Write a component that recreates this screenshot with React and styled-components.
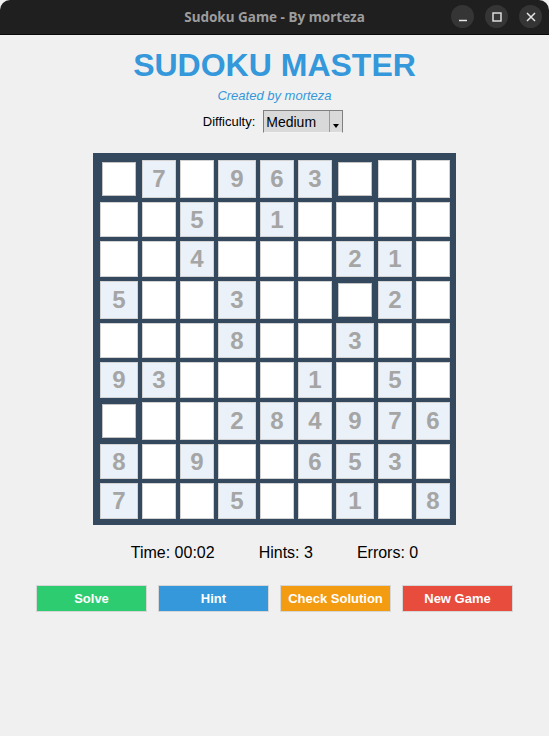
import React from "react";
import styled, { createGlobalStyle } from "styled-components";

const GlobalStyle = createGlobalStyle`
  html, body {
    margin: 0;
    padding: 0;
    background: #f0f0f0;
  }
  #root {
    min-height: 736px;
  }
`;

const Window = styled.div`
  width: 549px;
  min-height: 736px;
  background: #f0f0f0;
  font-family: "Liberation Sans", Arial, sans-serif;
`;

const TitleBar = styled.div`
  position: relative;
  height: 34px;
  background: #1f1f1f;
  border-bottom: 1px solid #0a0a0a;
  border-radius: 10px 10px 0 0;
  display: flex;
  align-items: center;
  justify-content: center;
`;

const WindowTitle = styled.div`
  font-family: "Noto Sans", "DejaVu Sans", sans-serif;
  font-weight: 700;
  font-size: 13.5px;
  color: #9c9c9c;
`;

const Controls = styled.div`
  position: absolute;
  right: 7px;
  top: 5px;
  display: flex;
  gap: 11px;
`;

const CtrlButton = styled.div`
  width: 23px;
  height: 23px;
  border-radius: 50%;
  background: #353535;
  display: flex;
  align-items: center;
  justify-content: center;
`;

const Main = styled.div`
  display: flex;
  flex-direction: column;
  align-items: center;
`;

const Title = styled.h1`
  margin: 12px 0 0;
  font-size: 32px;
  line-height: 37px;
  font-weight: 700;
  color: #3498db;
`;

const Subtitle = styled.div`
  margin-top: 4px;
  font-size: 13px;
  line-height: 16px;
  font-style: italic;
  color: #3498db;
`;

const DifficultyRow = styled.div`
  margin-top: 6px;
  display: flex;
  align-items: center;
  gap: 8px;
  font-size: 13px;
  color: #000;
  margin-left: -3px;
`;

const Select = styled.div`
  position: relative;
  width: 80px;
  height: 23px;
  box-sizing: border-box;
  background: #d9d9d9;
  border-top: 1px solid #808080;
  border-left: 1px solid #808080;
  border-right: 1px solid #808080;
  border-bottom: 1px solid #f4f4f4;
  display: flex;
  align-items: center;
  padding-left: 2px;
  font-size: 14px;
  color: #000;
`;

const Arrow = styled.div`
  position: absolute;
  right: 0;
  top: 0;
  bottom: 0;
  width: 12px;
  border-left: 1px solid #9a9a9a;
  background: #dadada;
  &::after {
    content: "";
    position: absolute;
    left: 3px;
    bottom: 4px;
    border-left: 3.5px solid transparent;
    border-right: 3.5px solid transparent;
    border-top: 4px solid #000;
  }
`;

const Board = styled.div`
  margin-top: 20px;
  background: #34495e;
  padding: 7px 6px 6px 7px;
  display: grid;
  grid-template-columns: 38px 34px 34px 38px 34px 34px 38px 34px 34px;
  grid-template-rows: 38px 35px 36px 38px 35px 36px 38px 35px 36px;
  gap: 4px;
`;

const Cell = styled.div`
  box-sizing: border-box;
  margin: ${(p) => (p.$small ? "2px" : "0")};
  background: ${(p) => (p.$given ? "#eaf1f8" : "#ffffff")};
  border: 1px solid ${(p) => (p.$small ? "#c4c4c4" : "#d2d2d2")};
  display: flex;
  align-items: center;
  justify-content: center;
  font-size: 24px;
  font-weight: 700;
  color: #a5a5a5;
`;

const Stats = styled.div`
  margin-top: 18px;
  display: flex;
  gap: 44px;
  font-size: 16px;
  line-height: 19px;
  color: #000;
`;

const ButtonRow = styled.div`
  margin-top: 23px;
  display: flex;
  gap: 11px;
`;

const ActionButton = styled.button`
  width: 111px;
  height: 27px;
  box-sizing: border-box;
  border: 1px solid #d6d6d6;
  background: ${(p) => p.$color};
  color: #ffffff;
  font-family: "Liberation Sans", Arial, sans-serif;
  font-size: 13px;
  font-weight: 700;
  padding: 0;
  cursor: pointer;
`;

const puzzle = [
  "070963000",
  "005010000",
  "004000210",
  "500300020",
  "000800300",
  "930001050",
  "000284976",
  "809006530",
  "700500108",
];

const smallCells = ["0-0", "0-6", "3-6", "6-0"];

const App = () => {
  return (
    <Window>
      <GlobalStyle />
      <TitleBar>
        <WindowTitle>Sudoku Game - By morteza</WindowTitle>
        <Controls>
          <CtrlButton>
            <svg width="10" height="10" viewBox="0 0 10 10">
              <line x1="1" y1="8.5" x2="9" y2="8.5" stroke="#e6e6e6" strokeWidth="1.5" />
            </svg>
          </CtrlButton>
          <CtrlButton>
            <svg width="10" height="10" viewBox="0 0 10 10">
              <rect x="1" y="1" width="8" height="8" fill="none" stroke="#e6e6e6" strokeWidth="1.4" />
            </svg>
          </CtrlButton>
          <CtrlButton>
            <svg width="10" height="10" viewBox="0 0 10 10">
              <path d="M1 1 L9 9 M9 1 L1 9" stroke="#e6e6e6" strokeWidth="1.5" />
            </svg>
          </CtrlButton>
        </Controls>
      </TitleBar>
      <Main>
        <Title>SUDOKU MASTER</Title>
        <Subtitle>Created by morteza</Subtitle>
        <DifficultyRow>
          <span>Difficulty:</span>
          <Select>
            Medium
            <Arrow />
          </Select>
        </DifficultyRow>
        <Board>
          {puzzle.map((row, r) =>
            row.split("").map((d, c) => (
              <Cell
                key={`${r}-${c}`}
                $given={d !== "0"}
                $small={smallCells.includes(`${r}-${c}`)}
              >
                {d !== "0" ? d : ""}
              </Cell>
            ))
          )}
        </Board>
        <Stats>
          <span>Time: 00:02</span>
          <span>Hints: 3</span>
          <span>Errors: 0</span>
        </Stats>
        <ButtonRow>
          <ActionButton $color="#2ecc71">Solve</ActionButton>
          <ActionButton $color="#3498db">Hint</ActionButton>
          <ActionButton $color="#f39c12">Check Solution</ActionButton>
          <ActionButton $color="#e74c3c">New Game</ActionButton>
        </ButtonRow>
      </Main>
    </Window>
  );
};

export default App;
